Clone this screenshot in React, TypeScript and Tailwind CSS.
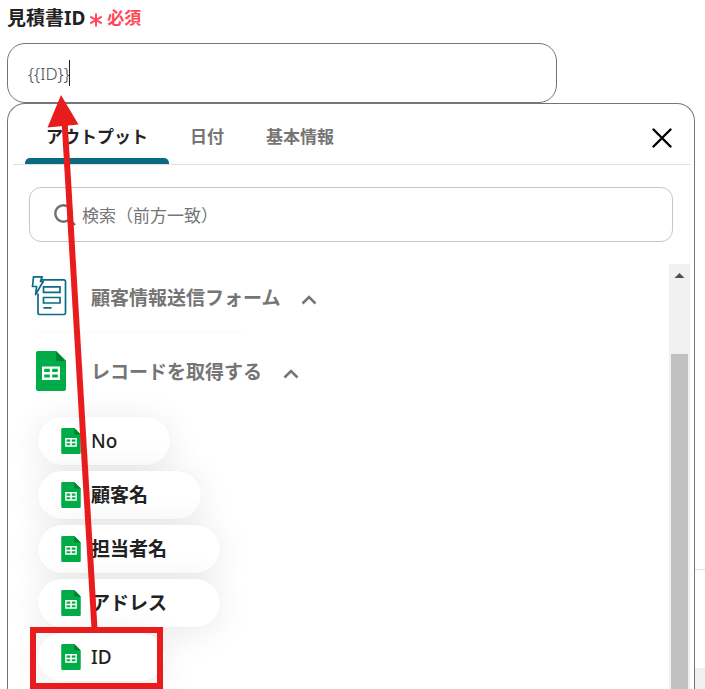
import React, { useState } from "react";

function SheetIcon({ className }: { className: string }) {
  return (
    <svg viewBox="0 0 30 40" className={className} aria-hidden="true">
      <path d="M2 0H20L30 10V38a2 2 0 0 1-2 2H2a2 2 0 0 1-2-2V2a2 2 0 0 1 2-2Z" fill="#00ac47" />
      <path d="M20 0L30 10H21.500Q20 10 20 8.500Z" fill="#00832d" />
      <path
        fillRule="evenodd"
        fill="#fff"
        d="M6 15.500H24V29H6ZM8.200 17.800V21H13.800V17.800ZM16.200 17.800V21H21.800V17.800ZM8.200 23.400V26.600H13.800V23.400ZM16.200 23.400V26.600H21.800V23.400Z"
      />
    </svg>
  );
}

function FormIcon() {
  return (
    <svg
      viewBox="0 0 36 42"
      className="h-[42px] w-9 shrink-0"
      fill="none"
      stroke="#0b6b86"
      strokeWidth="1.700"
      strokeLinejoin="round"
      strokeLinecap="round"
      aria-hidden="true"
    >
      <path d="M11 3.800H33a1.500 1.500 0 0 1 1.500 1.500V37a1.500 1.500 0 0 1-1.500 1.500H8.500a1.500 1.500 0 0 1-1.500-1.500V18" />
      <path d="M2.500 0.900H11.200L9.400 5.300H12.300L4.600 18.500L5.600 10.500H1.500Z" fill="#fff" />
      <path d="M12.500 10.800H29V16.300H12.500Z M12.500 21.500H29V27H12.500Z" strokeLinejoin="miter" />
      <path d="M13 31.800H20" />
    </svg>
  );
}

function ChevronUp() {
  return (
    <svg viewBox="0 0 16 10" className="mt-1 h-[10px] w-4" fill="none" stroke="#757575" strokeWidth="2.600" aria-hidden="true">
      <path d="M1.500 8.500L8 2L14.500 8.500" />
    </svg>
  );
}

function GroupHeader({ icon, title }: { icon: React.ReactNode; title: string }) {
  return (
    <button type="button" aria-expanded="true" className="flex h-[66px] items-center text-[19px] leading-7 font-bold text-[#757575]">
      <span className="flex w-[60px] items-center">{icon}</span>
      <span className="pt-px">{title}</span>
      <span className="ml-[21px] pt-px">
        <ChevronUp />
      </span>
    </button>
  );
}

const tabs = ["アウトプット", "日付", "基本情報"];
const fields = [
  { label: "No", latin: true },
  { label: "顧客名", latin: false },
  { label: "担当者名", latin: false },
  { label: "アドレス", latin: false },
  { label: "ID", latin: true },
];

export default function App() {
  const [active, setActive] = useState(0);
  return (
    <div className="relative flex h-screen overflow-hidden bg-white pl-[7px] font-['Noto_Sans','Noto_Sans_CJK_JP',sans-serif] text-[#222]">
      <main className="flex min-w-0 flex-1 flex-col">
        <label htmlFor="estimate" className="flex h-[43px] shrink-0 items-center pb-[7px] text-[19px] leading-7 font-bold">
          見積書ID
          <svg viewBox="0 0 14 14" className="mt-1 ml-1 size-[14px]" stroke="#ff4858" strokeWidth="2" aria-hidden="true">
            <path d="M7 0.500V13.500M1.300 3.700L12.700 10.300M12.700 3.700L1.300 10.300" />
          </svg>
          <span className="ml-1 text-[17px] font-bold text-[#ff4858]">必須</span>
        </label>
        <div className="mr-[138px] flex h-[60px] shrink-0 items-center rounded-[18px] border border-[#757575] px-5">
          <input
            id="estimate"
            defaultValue="{{ID}}"
            className="field-sizing-content min-w-0 pt-[2px] text-[17px] leading-7 font-light text-[#3f464d] outline-none"
          />
          <span className="-ml-px h-[26px] w-px bg-[#222]" />
        </div>

        <section className="flex min-h-0 flex-1 flex-col rounded-t-[18px] border border-b-0 border-[#757575] pr-1 pl-[5px]">
          <div className="flex h-[61px] shrink-0 items-stretch border-b border-[#e0e0e0] pl-3">
            <div role="tablist" className="flex flex-1">
              {tabs.map((tab, i) => (
                <button
                  key={tab}
                  type="button"
                  role="tab"
                  aria-selected={i === active}
                  onClick={() => setActive(i)}
                  className={
                    i === active
                      ? "flex flex-col items-stretch text-[17px] font-bold text-[#222]"
                      : "flex flex-col items-stretch text-[17px] font-bold text-[#757575]"
                  }
                >
                  <span className="flex flex-1 items-center px-[21px] pt-3">{tab}</span>
                  <span className={i === active ? "h-[6px] rounded-t-[5px] bg-[#0b6980]" : "h-[6px]"} />
                </button>
              ))}
            </div>
            <button type="button" aria-label="閉じる" className="mr-[18px] flex items-center pt-2">
              <svg viewBox="0 0 20 20" className="size-5" stroke="#000" strokeWidth="2.400" strokeLinecap="round" aria-hidden="true">
                <path d="M1.500 1.500L18.500 18.500M18.500 1.500L1.500 18.500" />
              </svg>
            </button>
          </div>

          <label className="mt-[22px] mr-[17px] mb-[22px] ml-4 flex h-[55px] shrink-0 items-center rounded-xl border border-[#c6c6c6] pl-6">
            <svg viewBox="0 0 22 22" className="size-[22px] shrink-0" fill="none" stroke="#6f6f6f" strokeWidth="2.400" aria-hidden="true">
              <circle cx="9.500" cy="9.500" r="8.200" />
              <path d="M15.300 15.300L21 21" />
            </svg>
            <input
              type="text"
              aria-label="検索"
              placeholder="検索（前方一致）"
              className="ml-[6px] min-w-0 flex-1 pt-[2px] text-[17px] leading-7 outline-none placeholder:text-[#757575]"
            />
          </label>

          <div className="flex min-h-0 flex-1">
            <div className="min-w-0 flex-1 overflow-hidden pl-[18px]">
              <GroupHeader icon={<FormIcon />} title="顧客情報送信フォーム" />
              <div className="ml-2 h-2 w-[208px] bg-linear-to-b from-[#fcfcfc] to-white" />
              <GroupHeader icon={<SheetIcon className="ml-[5px] h-10 w-[30px]" />} title="レコードを取得する" />
              <ul className="flex flex-col items-start gap-[6px] pt-[13px] pl-[7px]">
                {fields.map((f) => (
                  <li key={f.label}>
                    <button
                      type="button"
                      className="flex h-12 items-center rounded-full bg-white pr-[53px] pl-[23px] text-[19px] leading-7 shadow-[0_4px_36px_rgba(0,0,0,0.09),0_0_2px_rgba(0,0,0,0.04)]"
                    >
                      <SheetIcon className="h-[26px] w-5" />
                      <span className={f.latin ? "ml-[10px] font-medium" : "ml-[10px] font-bold"}>{f.label}</span>
                    </button>
                  </li>
                ))}
              </ul>
            </div>
            <div className="flex w-[21px] shrink-0 flex-col bg-[#f0f0f0] px-[2px]" aria-hidden="true">
              <svg viewBox="0 0 17 24" className="h-6 w-[17px] shrink-0">
                <path d="M8.500 9L13.500 14H3.500Z" fill="#505050" />
              </svg>
              <div className="mt-[66px] flex-1 bg-[#c1c1c1]" />
            </div>
          </div>
        </section>
      </main>

      <div className="flex w-[10px] shrink-0 flex-col justify-end">
        <div className="h-[99px] border-t border-[#e2e2e2]" />
        <div className="h-[21px] bg-[#f0f0f0]" />
      </div>

      {/* Callout drawn over the form: the picked field goes into the text box */}
      <svg viewBox="0 0 170 689" className="pointer-events-none absolute top-0 left-0 h-[689px] w-[170px]" fill="none" aria-hidden="true">
        <path d="M64.500 120L94.500 629" stroke="#e81c1c" strokeWidth="6" />
        <path d="M61 95L78.500 124.500L47.500 127.500Z" fill="#e81c1c" />
        <rect x="33" y="630" width="127" height="56" stroke="#e81c1c" strokeWidth="6" />
      </svg>
    </div>
  );
}
